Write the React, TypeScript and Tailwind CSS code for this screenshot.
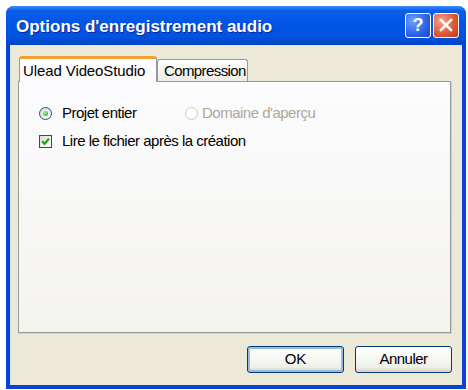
export default function App() {
  return (
    <div
      className="w-[468px] h-[390px] bg-white pl-[6px] pt-[6px]"
      style={{ fontFamily: '"Liberation Sans", Arial, sans-serif' }}
    >
      {/* Window */}
      <div className="w-[460px] h-[383px] flex flex-col rounded-t-[8px] overflow-hidden bg-[#0842d6]">
        {/* Title bar */}
        <div className="h-[39px] flex items-center justify-between pl-[10px] pr-[7px] bg-[linear-gradient(to_bottom,#3e8df7_0%,#0a5ee9_12%,#0055e5_45%,#0052de_80%,#0046c6_100%)]">
          <span className="text-white font-bold text-[17px] mt-[2px] [text-shadow:1px_1px_0_#0a2a9a]">
            Options d'enregistrement audio
          </span>
          <div className="flex gap-[2px] mt-[-1px]">
            {/* Help */}
            <div className="w-[26px] h-[25px] rounded-[3px] border border-white flex items-center justify-center bg-[radial-gradient(circle_at_30%_30%,#6fa1ff,#2a62e8_60%,#1a48c8)]">
              <span className="text-white font-bold text-[18px] leading-none">?</span>
            </div>
            {/* Close */}
            <div className="w-[26px] h-[25px] rounded-[3px] border border-white flex items-center justify-center bg-[radial-gradient(circle_at_30%_30%,#f3a08a,#e0542e_60%,#c4381a)]">
              <svg width="14" height="14" viewBox="0 0 14 14">
                <path d="M2 2 L12 12 M12 2 L2 12" stroke="white" strokeWidth="2.6" strokeLinecap="square" />
              </svg>
            </div>
          </div>
        </div>

        {/* Body */}
        <div className="flex-1 mx-[4px] mb-[4px] bg-[#ece9d8] border-l border-[#d8e4f8] flex flex-col pl-[7px] pt-[10px]">
          {/* Tabs */}
          <div className="flex items-end h-[26px] pl-[1px] relative z-10">
            <div className="h-[26px] pl-[3px] pt-[3px] border-x border-[#919b9c] border-t-[3px] border-t-[#f0a030] rounded-t-[3px] bg-[#fcfcfe] text-[15px] tracking-[-0.1px] text-black leading-[18px] w-[138px] mb-[-1px]">
              Ulead VideoStudio
            </div>
            <div className="h-[22px] pl-[6px] pt-[1px] border border-b-0 border-[#919b9c] rounded-t-[3px] bg-[linear-gradient(to_bottom,#ffffff,#ecebe5)] text-[15px] tracking-[-0.6px] text-black leading-[19px] w-[91px]">
              Compression
            </div>
          </div>

          {/* Panel */}
          <div className="w-[433px] h-[252px] border border-[#919b9c] bg-[linear-gradient(to_bottom,#fcfcfe,#f4f3ee)] shadow-[1px_1px_0_#d0cfc4] flex flex-col pl-[20px] pt-[22px] text-[15px] tracking-[-0.5px]">
            <div className="flex items-center h-[18px]">
              <div className="w-[146px] flex items-center">
                <div className="w-[13px] h-[13px] rounded-full border border-[#1c5180] bg-[linear-gradient(135deg,#dcdcd4,#ffffff)] flex items-center justify-center">
                  <div className="w-[5px] h-[5px] rounded-full bg-[radial-gradient(circle_at_35%_35%,#a8f09c,#21a121)]" />
                </div>
                <span className="ml-[10px] text-black">Projet entier</span>
              </div>
              <div className="w-[13px] h-[13px] rounded-full border border-[#cac8bb] bg-white" />
              <span className="ml-[4px] text-[#aca899]">Domaine d'aperçu</span>
            </div>
            <div className="flex items-center h-[18px] mt-[10px]">
              <div className="w-[13px] h-[13px] border border-[#1c5180] bg-[linear-gradient(135deg,#dcdcd4,#ffffff)] flex items-center justify-center">
                <svg width="9" height="9" viewBox="0 0 9 9">
                  <path d="M1 4.3 L3.5 6.8 L8 1.8" stroke="#21a121" strokeWidth="2.2" fill="none" />
                </svg>
              </div>
              <span className="ml-[10px] text-black">Lire le fichier après la création</span>
            </div>
          </div>

          {/* Buttons */}
          <div className="flex justify-end gap-[11px] mt-[13px] pr-[10px]">
            <button className="w-[97px] h-[27px] rounded-[3px] border border-[#003c74] bg-[linear-gradient(to_bottom,#ffffff,#f0f0ea_80%,#d6d0c5)] shadow-[inset_0_0_0_2px_#98b8ea] text-[15px] text-black">
              OK
            </button>
            <button className="w-[97px] h-[27px] rounded-[3px] border border-[#003c74] bg-[linear-gradient(to_bottom,#ffffff,#f0f0ea_80%,#d6d0c5)] text-[15px] tracking-[-0.5px] text-black">
              Annuler
            </button>
          </div>
        </div>
      </div>
    </div>
  );
}
